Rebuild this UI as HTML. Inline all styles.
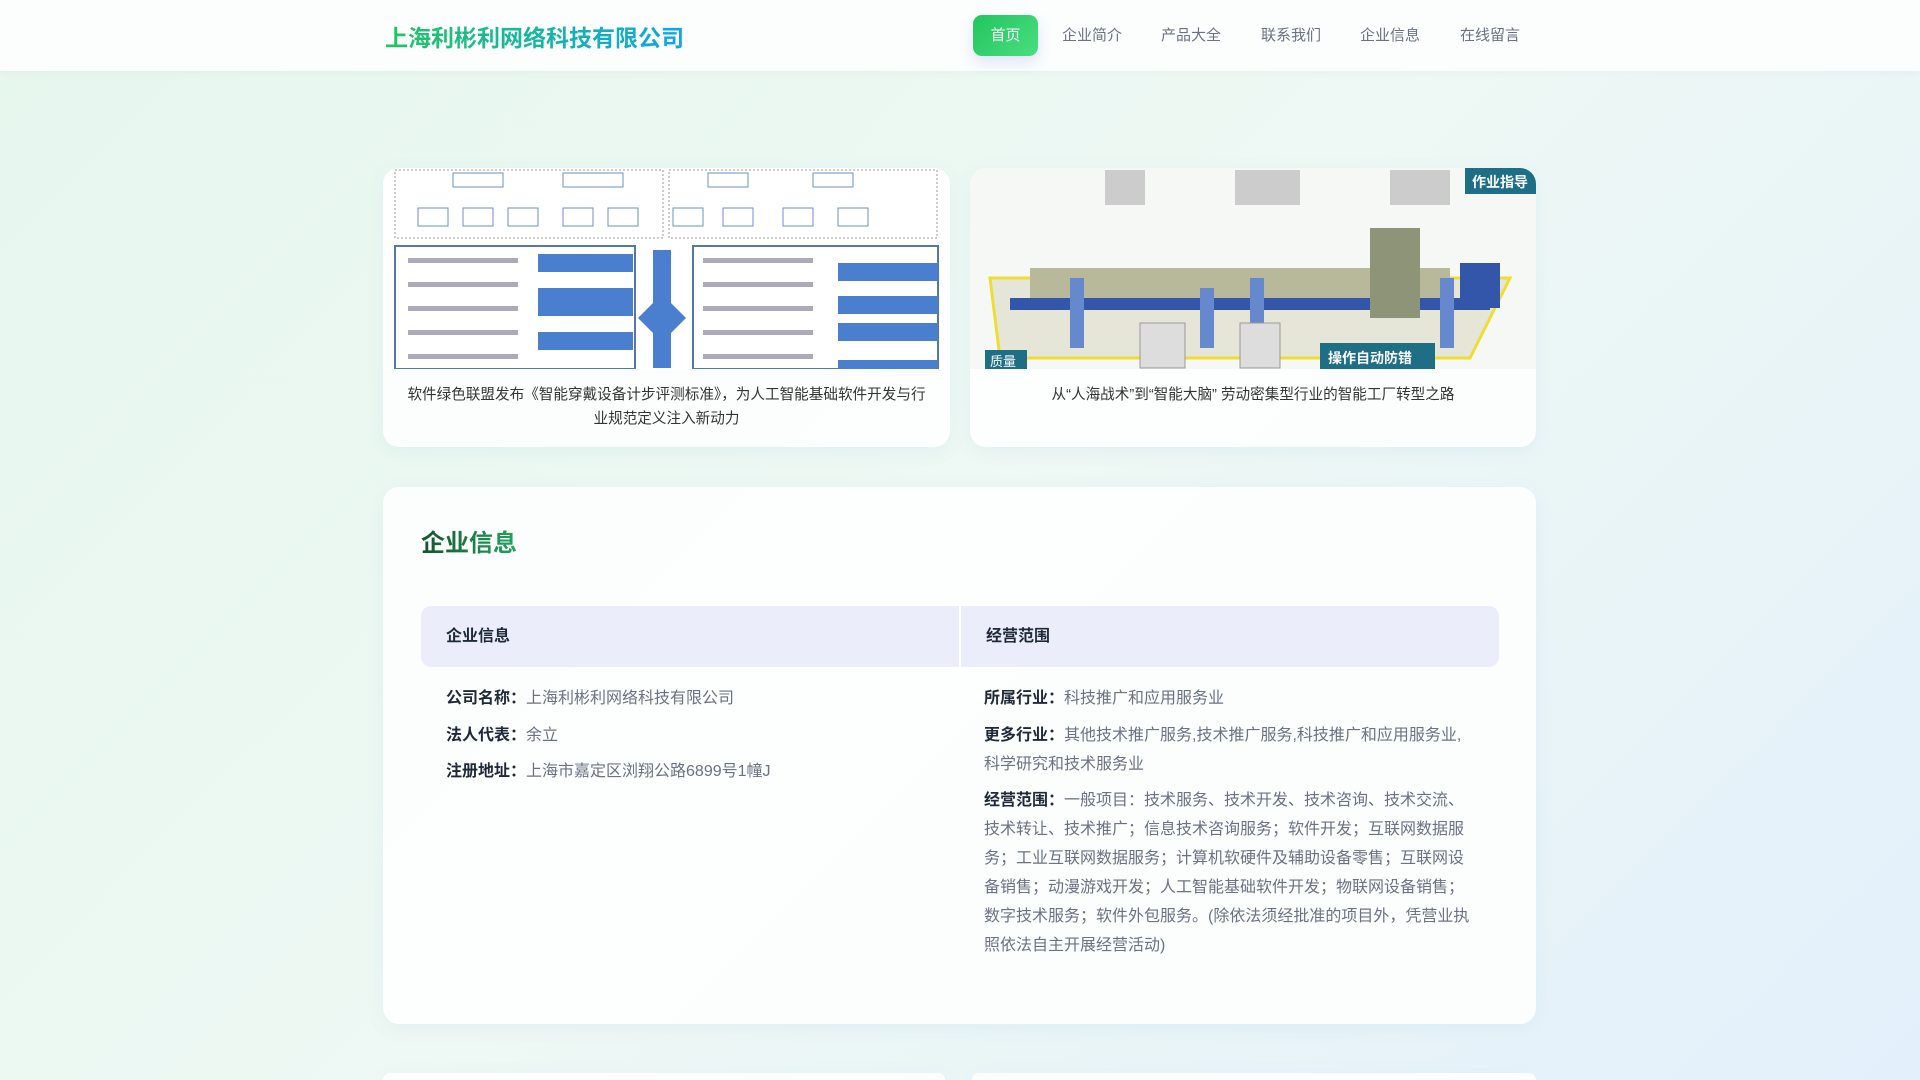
<!DOCTYPE html>
<html><head><meta charset="utf-8"><style>
*{margin:0;padding:0;box-sizing:border-box}
html,body{width:1920px;height:1080px;overflow:hidden}
body{font-family:"Liberation Sans","Noto Sans CJK SC",sans-serif;background:linear-gradient(135deg,#e6f7ee 0%,#eef8f4 50%,#e3f0fb 100%);position:relative}
.hdr{position:absolute;left:0;top:0;width:1920px;height:71px;background:#fbfefd;box-shadow:0 2px 8px rgba(0,0,0,.03)}
.logo{position:absolute;left:385px;top:19px;font-size:23px;font-weight:bold;background:linear-gradient(90deg,#22c55e,#0ea5e9);-webkit-background-clip:text;color:transparent;letter-spacing:0}
.nav a{position:absolute;top:15px;height:41px;line-height:41px;font-size:15px;color:#6b7280;text-decoration:none}
.nav a.on{left:973px;width:65px;text-align:center;color:#fff;background:linear-gradient(135deg,#22c55e,#4ade80);border-radius:9px;box-shadow:0 6px 14px rgba(99,102,241,.18)}
.card{position:absolute;background:rgba(255,255,255,.85);border-radius:16px;box-shadow:0 4px 18px rgba(100,150,200,.08)}
.img{position:absolute;left:0;top:0;width:100%;height:201px;border-radius:16px 16px 0 0;overflow:hidden}
.cap{position:absolute;top:215px;left:18px;right:18px;text-align:center;font-size:14.6px;line-height:24px;color:#333}
.title{position:absolute;left:421px;top:523px;font-size:24px;font-weight:bold;background:linear-gradient(90deg,#14532d,#22a55e);-webkit-background-clip:text;color:transparent}
.th{position:absolute;top:606px;height:61px;background:#ebedfb;line-height:61px;font-size:16px;font-weight:bold;color:#1f2937;padding-left:25px}
.row{position:absolute;font-size:16px;line-height:29px;color:#6b7280}
.row b{color:#1f2937}
</style></head><body>
<div class="hdr">
<div class="logo">上海利彬利网络科技有限公司</div>
<div class="nav">
<a class="on">首页</a>
<a style="left:1062px">企业简介</a>
<a style="left:1161px">产品大全</a>
<a style="left:1261px">联系我们</a>
<a style="left:1360px">企业信息</a>
<a style="left:1460px">在线留言</a>
</div></div>

<div class="card" style="left:383px;top:168px;width:567px;height:279px">
<div class="img"><svg width="567" height="201">
<rect width="567" height="201" fill="#fff"/>
<rect x="12" y="2" width="268" height="68" fill="none" stroke="#999" stroke-dasharray="2,2"/>
<rect x="286" y="2" width="268" height="68" fill="none" stroke="#999" stroke-dasharray="2,2"/>
<g fill="#fff" stroke="#6b8fc5"><rect x="70" y="5" width="50" height="14"/><rect x="180" y="5" width="60" height="14"/><rect x="325" y="5" width="40" height="14"/><rect x="430" y="5" width="40" height="14"/>
<rect x="35" y="40" width="30" height="18"/><rect x="80" y="40" width="30" height="18"/><rect x="125" y="40" width="30" height="18"/><rect x="180" y="40" width="30" height="18"/><rect x="225" y="40" width="30" height="18"/><rect x="290" y="40" width="30" height="18"/><rect x="340" y="40" width="30" height="18"/><rect x="400" y="40" width="30" height="18"/><rect x="455" y="40" width="30" height="18"/></g>
<rect x="12" y="78" width="240" height="123" fill="none" stroke="#5577aa" stroke-width="2"/>
<rect x="310" y="78" width="245" height="123" fill="none" stroke="#5577aa" stroke-width="2"/>
<g fill="#4a7fcf"><rect x="155" y="86" width="95" height="18"/><rect x="155" y="120" width="95" height="28"/><rect x="155" y="164" width="95" height="18"/><rect x="270" y="82" width="18" height="118"/><polygon points="255,150 270,135 270,165"/><polygon points="303,150 288,135 288,165"/><rect x="455" y="95" width="100" height="18"/><rect x="455" y="128" width="100" height="18"/><rect x="455" y="155" width="100" height="18"/><rect x="455" y="192" width="100" height="9"/></g>
<g fill="#aab" ><rect x="25" y="90" width="110" height="5"/><rect x="25" y="114" width="110" height="5"/><rect x="25" y="138" width="110" height="5"/><rect x="25" y="162" width="110" height="5"/><rect x="25" y="186" width="110" height="5"/><rect x="320" y="90" width="110" height="5"/><rect x="320" y="114" width="110" height="5"/><rect x="320" y="138" width="110" height="5"/><rect x="320" y="162" width="110" height="5"/><rect x="320" y="186" width="110" height="5"/></g>
</svg></div>
<div class="cap">软件绿色联盟发布《智能穿戴设备计步评测标准》，为人工智能基础软件开发与行业规范定义注入新动力</div>
</div>

<div class="card" style="left:970px;top:168px;width:566px;height:279px">
<div class="img"><svg width="566" height="201">
<rect width="566" height="201" fill="#f6f8f6"/>
<polygon points="20,110 540,110 500,190 30,190" fill="#e6e6d8" stroke="#eedd33" stroke-width="3"/>
<rect x="60" y="100" width="420" height="40" fill="#b8b89a"/>
<rect x="40" y="130" width="480" height="12" fill="#3355aa"/>
<g fill="#6688cc"><rect x="100" y="110" width="14" height="70"/><rect x="230" y="120" width="14" height="60"/><rect x="280" y="110" width="14" height="70"/><rect x="470" y="110" width="14" height="70"/></g>
<rect x="400" y="60" width="50" height="90" fill="#8e9478"/>
<rect x="490" y="95" width="40" height="45" fill="#3355aa"/>
<g fill="#ccc"><rect x="135" y="2" width="40" height="35"/><rect x="265" y="2" width="65" height="35"/><rect x="420" y="2" width="60" height="35"/></g>
<g fill="#ddd" stroke="#999"><rect x="170" y="155" width="45" height="45"/><rect x="270" y="155" width="40" height="45"/></g>
<rect x="495" y="0" width="71" height="26" fill="#1e6e86"/><text x="502" y="19" font-size="14" fill="#fff" font-weight="bold" font-family="Noto Sans CJK SC">作业指导</text>
<rect x="350" y="175" width="115" height="26" fill="#1e6e86"/><text x="358" y="195" font-size="14" fill="#fff" font-weight="bold" font-family="Noto Sans CJK SC">操作自动防错</text>
<rect x="15" y="182" width="42" height="19" fill="#1e6e86"/><text x="20" y="198" font-size="13" fill="#fff" font-family="Noto Sans CJK SC">质量</text>
</svg></div>
<div class="cap">从“人海战术”到“智能大脑” 劳动密集型行业的智能工厂转型之路</div>
</div>

<div class="card" style="left:383px;top:487px;width:1153px;height:537px"></div>
<div class="title">企业信息</div>
<div class="th" style="left:421px;width:538px;border-radius:10px 0 0 10px">企业信息</div>
<div class="th" style="left:961px;width:538px;border-radius:0 10px 10px 0">经营范围</div>
<div class="row" style="left:446px;top:684px"><b>公司名称：</b>上海利彬利网络科技有限公司</div>
<div class="row" style="left:446px;top:721px"><b>法人代表：</b>余立</div>
<div class="row" style="left:446px;top:757px"><b>注册地址：</b>上海市嘉定区浏翔公路6899号1幢J</div>
<div class="row" style="left:984px;top:684px;width:488px"><b>所属行业：</b>科技推广和应用服务业</div>
<div class="row" style="left:984px;top:721px;width:488px"><b>更多行业：</b>其他技术推广服务,技术推广服务,科技推广和应用服务业,科学研究和技术服务业</div>
<div class="row" style="left:984px;top:786px;width:495px"><b>经营范围：</b>一般项目：技术服务、技术开发、技术咨询、技术交流、技术转让、技术推广；信息技术咨询服务；软件开发；互联网数据服务；工业互联网数据服务；计算机软硬件及辅助设备零售；互联网设备销售；动漫游戏开发；人工智能基础软件开发；物联网设备销售；数字技术服务；软件外包服务。(除依法须经批准的项目外，凭营业执照依法自主开展经营活动)</div>

<div class="card" style="left:383px;top:1073px;width:562px;height:7px;border-radius:16px 16px 0 0"></div>
<div class="card" style="left:972px;top:1073px;width:564px;height:7px;border-radius:16px 16px 0 0"></div>
</body></html>
